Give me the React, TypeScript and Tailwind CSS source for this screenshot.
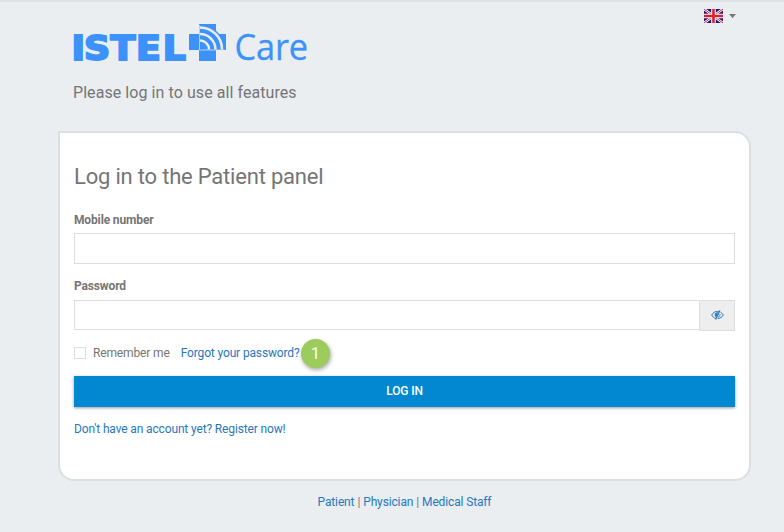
import React, { useState } from 'react';

const footerLinks = ['Patient', 'Physician', 'Medical Staff'];

function Logo() {
  return (
    <svg width="248" height="54" viewBox="-4 -4 248 54" className="-ml-1 block" aria-label="ISTEL Care">
      <text transform="scale(1.1 1)" x="-1.4 9.900 34 57.200 81.600" y="37.600" fontFamily="'DejaVu Sans', sans-serif" fontSize="33" fontWeight="700" letterSpacing="0" fill="#3d91fb" stroke="#3d91fb" strokeWidth="2">ISTEL</text>
      <path fill="#3d91fb" d="M126 2h17v10h10v16h-10v11h-17V28h-10V12h10z" />
      <path d="M127 4h7c9 2 17 11 18 23h-25z" fill="#3d91fb" />
      <path d="M127 5.500a22 22 0 0 1 22 22M127 12a15.500 15.500 0 0 1 15.500 15.500M127 18.500a9 9 0 0 1 9 9" fill="none" stroke="#eaeef1" strokeWidth="2.500" />
      <path d="M126.500 3v25h25" fill="none" stroke="#eaeef1" strokeWidth="0.700" />
      <text x="161.500" y="38" fontFamily="'Open Sans', sans-serif" fontSize="36" fontWeight="400" fill="#3d91fb" stroke="#3d91fb" strokeWidth="0.300" textLength="73.500" lengthAdjust="spacingAndGlyphs">Care</text>
    </svg>
  );
}

function UkFlag() {
  return (
    <svg width="19" height="14" viewBox="0 0 19 14" className="block">
      <path fill="#15157d" d="M0 0h19v14H0z" />
      <path d="m0 0 19 14M19 0 0 14" stroke="#fff" strokeWidth="2.600" />
      <path d="m0 0 19 14M19 0 0 14" stroke="#d8202f" strokeWidth="1" />
      <path d="M9.500 0v14M0 7h19" stroke="#fff" strokeWidth="4.600" />
      <path d="M9.500 0v14M0 7h19" stroke="#d8202f" strokeWidth="2.600" />
    </svg>
  );
}

function EyeSlash() {
  return (
    <svg width="13" height="10" viewBox="0 0 13 10" fill="none" stroke="currentColor" className="block">
      <path d="M5 8.600C3 8 1.500 6.600.700 5 2 2.700 4 1.400 6.500 1.400c.5 0 1 0 1.500.2M9.600 2.200c1.200.7 2 1.600 2.700 2.800-1.200 2.200-3.200 3.500-5.600 3.600" />
      <path d="M8.800.400 4.700 9.600" strokeWidth="1.300" />
      <path d="M6.500 2.300C4.800 2.300 3.700 3.500 3.700 5c0 .9.500 1.700 1.300 2.200l2.100-4.800z" fill="currentColor" stroke="none" />
      <path d="M9 4.200C9.200 5.700 8.500 6.800 7.200 7.200" />
    </svg>
  );
}

export default function App() {
  const [phone, setPhone] = useState('');
  const [password, setPassword] = useState('');
  const [visible, setVisible] = useState(false);
  const [remember, setRemember] = useState(false);

  return (
    <div className="h-[532px] w-[784px] overflow-hidden border-t-2 border-[#dfe1e3] bg-[#eaeef1] font-['Roboto',sans-serif] text-xs tracking-[-0.14px] text-[#757575]">
      <header className="flex h-[129px] justify-between pl-[73px] pr-12">
        <div className="pt-4">
          <Logo />
          <p className="mt-[9px] text-base leading-6 tracking-[0.07px]">Please log in to use all features</p>
        </div>
        <button className="mt-[7px] flex h-[14px] items-center gap-[6px]">
          <UkFlag />
          <svg width="7" height="4" viewBox="0 0 7 4" className="block">
            <path d="M0 0h7L3.500 4z" fill="#777" />
          </svg>
        </button>
      </header>

      <main className="ml-[58px] h-[350px] w-[693px] rounded-[16px] rounded-tl-none border-2 border-[#dcdfe1] bg-white px-[14px] pt-[29px]">
        <h1 className="text-[22px] leading-[30px] tracking-[-0.2px]">Log in to the Patient panel</h1>
        <form onSubmit={(e) => e.preventDefault()}>
          <label htmlFor="phone" className="mt-5 block font-bold leading-4">Mobile number</label>
          <input
            id="phone"
            value={phone}
            onChange={(e) => setPhone(e.target.value)}
            className="mt-[5px] block h-[31px] w-full border border-[#dcdee0] px-3 outline-none"
          />
          <label htmlFor="password" className="mt-[14px] block font-bold leading-4">Password</label>
          <div className="mt-[6px] flex h-[31px]">
            <input
              id="password"
              type={visible ? 'text' : 'password'}
              value={password}
              onChange={(e) => setPassword(e.target.value)}
              className="h-[30px] min-w-0 flex-1 border border-r-0 border-[#dcdee0] px-3 outline-none"
            />
            <button
              type="button"
              onClick={() => setVisible(!visible)}
              className="flex w-9 items-center justify-center border border-[#dcdee0] bg-[#eee] pb-[2px] text-[#2878bd]"
            >
              <EyeSlash />
            </button>
          </div>
          <div className="mt-[7px] flex h-[30px] items-center">
            <label className="flex items-center gap-[7px]">
              <input
                type="checkbox"
                checked={remember}
                onChange={(e) => setRemember(e.target.checked)}
                className="size-3 appearance-none border border-[#dcdee0] bg-white checked:bg-[#0288d1]"
              />
              Remember me
            </label>
            <a href="#" className="ml-[11px] text-[#2878bd]">Forgot your password?</a>
            <span className="ml-[1.500px] flex size-[29px] items-center justify-center rounded-full bg-[#9ccc5c] pt-[2px] text-base text-white shadow-[1px_2px_4px_rgba(0,0,0,0.35)]">1</span>
          </div>
          <button type="submit" className="mt-2 block h-[31px] w-full bg-[#0288d1] pb-[2px] font-medium text-white shadow-[0_1px_3px_rgba(0,0,0,0.4)]">
            LOG IN
          </button>
        </form>
        <a href="#" className="mt-[14px] block leading-4 text-[#2878bd]">Don't have an account yet? Register now!</a>
      </main>

      <footer className="ml-[58px] mt-[13px] flex w-[693px] justify-center gap-[3px] leading-4">
        {footerLinks.map((name, i) => (
          <React.Fragment key={name}>
            {i > 0 && <span>|</span>}
            <a href="#" className="text-[#2878bd]">{name}</a>
          </React.Fragment>
        ))}
      </footer>
    </div>
  );
}
